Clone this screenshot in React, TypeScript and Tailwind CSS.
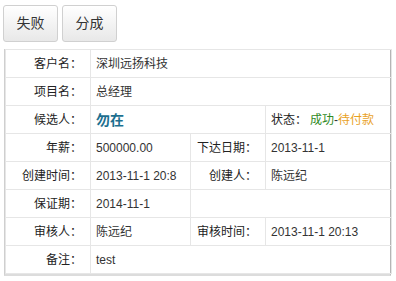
import React from "react";

const font = { fontFamily: '"Liberation Sans", "Noto Sans CJK SC", sans-serif' };

function Label({ children, colSpan }: { children?: React.ReactNode; colSpan?: number }) {
  return (
    <td colSpan={colSpan} className="border border-[#e6e6e6] text-right pr-[8px] text-[12px] text-[#222] p-0 leading-none">
      {children}
    </td>
  );
}

function Val({ children, colSpan, className }: { children?: React.ReactNode; colSpan?: number; className?: string }) {
  return (
    <td colSpan={colSpan} className={"border border-[#e6e6e6] text-left pl-[5px] text-[12px] text-[#333] p-0 leading-none " + (className ?? "")}>
      {children}
    </td>
  );
}

export default function App() {
  return (
    <div className="w-[396px] h-[281px] bg-white" style={font}>
      <div className="flex gap-[4px] pl-[3px] pt-[5px]">
        <button className="w-[55px] h-[37px] rounded-[3px] border border-[#d0d0d0] bg-gradient-to-b from-[#ffffff] to-[#e8e8e8] text-[14px] text-[#333] shadow-[inset_0_1px_0_rgba(255,255,255,0.8)]">
          失败
        </button>
        <button className="w-[55px] h-[37px] rounded-[3px] border border-[#d0d0d0] bg-gradient-to-b from-[#ffffff] to-[#e8e8e8] text-[14px] text-[#333] shadow-[inset_0_1px_0_rgba(255,255,255,0.8)]">
          分成
        </button>
      </div>
      <div className="ml-[4px] mt-[7px] w-[387px] border-l border-l-[#cfcfcf] border-r border-r-[#b5b5b5] border-b-2 border-b-[#dcdcdc]">
        <table className="w-[386px] border-collapse table-fixed">
          <colgroup>
            <col className="w-[85px]" />
            <col className="w-[100px]" />
            <col className="w-[75px]" />
            <col className="w-[126px]" />
          </colgroup>
          <tbody>
            <tr className="h-[28px]">
              <Label>客户名：</Label>
              <Val colSpan={3}>深圳远扬科技</Val>
            </tr>
            <tr className="h-[28px]">
              <Label>项目名：</Label>
              <Val colSpan={3}>总经理</Val>
            </tr>
            <tr className="h-[28px]">
              <Label>候选人：</Label>
              <Val colSpan={2} className="!text-[14px] font-bold !text-[#1d6f8f]">勿在</Val>
              <Val>
                <span className="text-[#222]">状态：</span>
                <span className="ml-[3px] text-[#2f8a1e]">成功</span>
                <span className="text-[#333]">-</span>
                <span className="text-[#e9a21f]">待付款</span>
              </Val>
            </tr>
            <tr className="h-[28px]">
              <Label>年薪：</Label>
              <Val>500000.00</Val>
              <Label>下达日期：</Label>
              <Val>2013-11-1</Val>
            </tr>
            <tr className="h-[28px]">
              <Label>创建时间：</Label>
              <Val>2013-11-1 20:8</Val>
              <Label>创建人：</Label>
              <Val>陈远纪</Val>
            </tr>
            <tr className="h-[28px]">
              <Label>保证期：</Label>
              <Val>2014-11-1</Val>
              <Val colSpan={2}></Val>
            </tr>
            <tr className="h-[28px]">
              <Label>审核人：</Label>
              <Val>陈远纪</Val>
              <Label>审核时间：</Label>
              <Val>2013-11-1 20:13</Val>
            </tr>
            <tr className="h-[28px]">
              <Label>备注：</Label>
              <Val colSpan={3}>test</Val>
            </tr>
          </tbody>
        </table>
      </div>
    </div>
  );
}
